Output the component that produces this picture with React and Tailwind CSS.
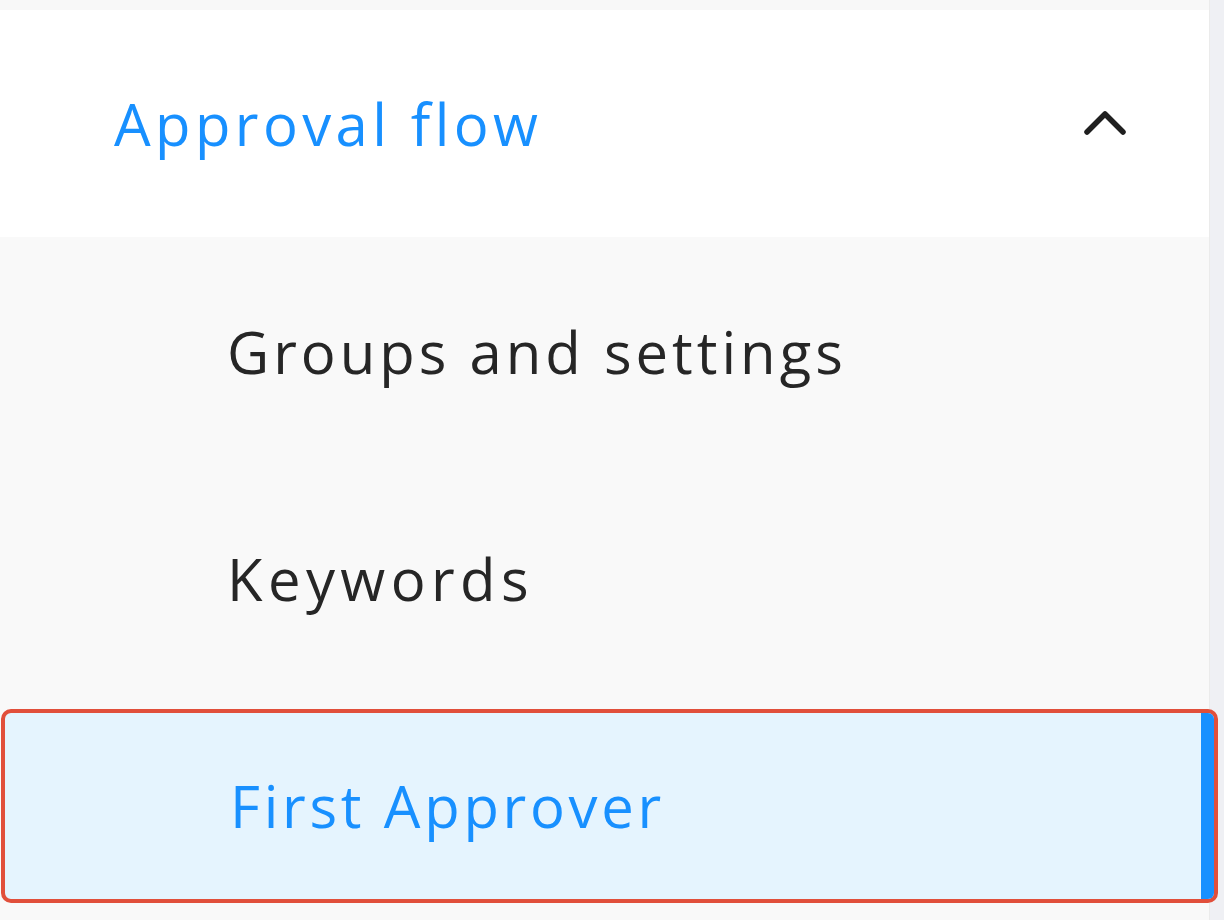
import React from "react";

const font = { fontFamily: "'Open Sans', 'Noto Sans', sans-serif" };

function Item({ label, selected, track = "tracking-[3.8px]" }) {
  if (selected) {
    return (
      <div className="relative z-10 ml-px w-[1217px] h-[194px] rounded-[10px] border-4 border-[#e14f3b] bg-[#e5f4fe] flex items-center overflow-hidden">
        <span className="pl-[225px] text-[58px] leading-none tracking-[3.7px] text-[#1890ff]">{label}</span>
        <div className="ml-auto h-full w-[13px] bg-[#1890ff]" />
      </div>
    );
  }
  return (
    <div className="h-[194px] flex items-center">
      <span className={"pl-[227px] text-[58px] leading-none text-[#262626] " + track}>{label}</span>
    </div>
  );
}

export default function App() {
  return (
    <div className="flex w-[1224px] h-[920px] overflow-hidden bg-[#f8f8f8]" style={font}>
      <div className="w-[1209px] flex flex-col">
        <div className="h-[10px] bg-[#f8f8f8]" />
        <div className="h-[227px] bg-white flex items-center pl-[114px] pr-[82px]">
          <span className="text-[58px] leading-none tracking-[4.4px] text-[#1890ff]">Approval flow</span>
          <svg className="ml-auto" width="44" height="28" viewBox="0 0 44 28" fill="none">
            <polyline points="4,22 22,4 40,22" stroke="#1f1f1f" strokeWidth="5.5" strokeLinecap="round" strokeLinejoin="round" />
          </svg>
        </div>
        <div className="flex-1 bg-[#f9f9f9] flex flex-col pt-[18px] gap-[33px]">
          <Item label="Groups and settings" track="tracking-[4px]" />
          <Item label="Keywords" track="tracking-[5.4px]" />
          <Item label="First Approver" selected />
        </div>
      </div>
      <div className="w-[15px] bg-[#eff0f4] border-l border-[#ebebeb]" />
    </div>
  );
}
